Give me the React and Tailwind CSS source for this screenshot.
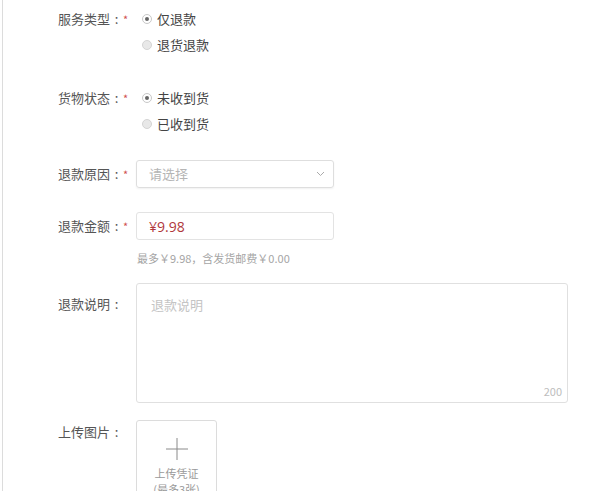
import React from "react";

const font = { fontFamily: '"Noto Sans CJK SC", "Noto Sans", sans-serif' };

function Radio({ checked, label }) {
  return (
    <div className="flex items-center h-[26px]">
      {checked ? (
        <span className="w-[10px] h-[10px] rounded-full border border-[#c8c8c8] bg-white flex items-center justify-center">
          <span className="w-[4px] h-[4px] rounded-full bg-[#666]" />
        </span>
      ) : (
        <span className="w-[10px] h-[10px] rounded-full border border-[#d4d4d4] bg-[#e8e8e8]" />
      )}
      <span className="ml-[5px] text-[13px] text-[#444] leading-[20px]">{label}</span>
    </div>
  );
}

function Label({ text, star }) {
  return (
    <div className="w-[79px] shrink-0 text-[13px] leading-[20px] text-[#555] flex items-center">
      <span>{text}</span>
      <span className="ml-[1px] w-[11px] text-center">:</span>
      {star && <span className="ml-[1px] text-[#d05050] text-[11px]">*</span>}
    </div>
  );
}

export default function App() {
  return (
    <div className="w-[600px] h-[491px] bg-white overflow-hidden" style={font}>
      <div className="ml-[2px] h-full border-l border-[#dcdcdc] pl-[55px] pt-[6px] flex flex-col">
        <div className="flex">
          <div className="pt-[3px]"><Label text="服务类型" star /></div>
          <div className="ml-[5px]">
            <Radio checked label="仅退款" />
            <Radio label="退货退款" />
          </div>
        </div>

        <div className="flex mt-[27px]">
          <div className="pt-[3px]"><Label text="货物状态" star /></div>
          <div className="ml-[5px]">
            <Radio checked label="未收到货" />
            <Radio label="已收到货" />
          </div>
        </div>

        <div className="flex items-center mt-[23px]">
          <Label text="退款原因" star />
          <div className="-ml-[1px] w-[198px] h-[28px] border border-[#dedede] rounded-[3px] shadow-[0_1px_2px_rgba(0,0,0,0.06)] flex items-center justify-between pl-[12px] pr-[8px]">
            <span className="text-[13px] text-[#b5b5b5]">请选择</span>
            <svg width="9" height="6" viewBox="0 0 9 6" fill="none">
              <path d="M1 1l3.5 3.5L8 1" stroke="#aaa" strokeWidth="1" />
            </svg>
          </div>
        </div>

        <div className="flex items-center mt-[24px]">
          <Label text="退款金额" star />
          <div className="-ml-[1px] w-[198px] h-[28px] border border-[#e3e3e3] rounded-[3px] flex items-center pl-[12px]">
            <span className="text-[14px] text-[#b0383c]" style={{ fontFamily: '"Open Sans", "Noto Sans CJK SC", sans-serif' }}>¥9.98</span>
          </div>
        </div>

        <div className="pl-[79px] mt-[10px] h-[16px] text-[11px] leading-[16px] text-[#a5a5a5]">
          最多￥9.98，含发货邮费￥0.00
        </div>

        <div className="flex mt-[17px]">
          <div className="pt-[11px]"><Label text="退款说明" /></div>
          <div className="-ml-[1px] relative w-[432px] h-[120px] border border-[#e0e0e0] rounded-[3px] pl-[14px] pt-[7px]">
            <span className="text-[13px] text-[#c4c4c4] leading-[20px]">退款说明</span>
            <span className="absolute right-[5px] bottom-[3px] text-[11px] text-[#bdbdbd]">200</span>
          </div>
        </div>

        <div className="flex mt-[17px]">
          <div className="pt-[2px]"><Label text="上传图片" /></div>
          <div className="-ml-[1px] w-[81px] h-[90px] border border-[#dcdcdc] rounded-[3px] flex flex-col items-center pt-[17px]">
            <svg width="22" height="22" viewBox="0 0 22 22">
              <path d="M11 0v22M0 11h22" stroke="#8a8a8a" strokeWidth="1" />
            </svg>
            <span className="mt-[5px] text-[11px] leading-[16px] text-[#999]">上传凭证</span>
            <span className="text-[11px] leading-[16px] text-[#999]">(最多3张)</span>
          </div>
        </div>
      </div>
    </div>
  );
}
